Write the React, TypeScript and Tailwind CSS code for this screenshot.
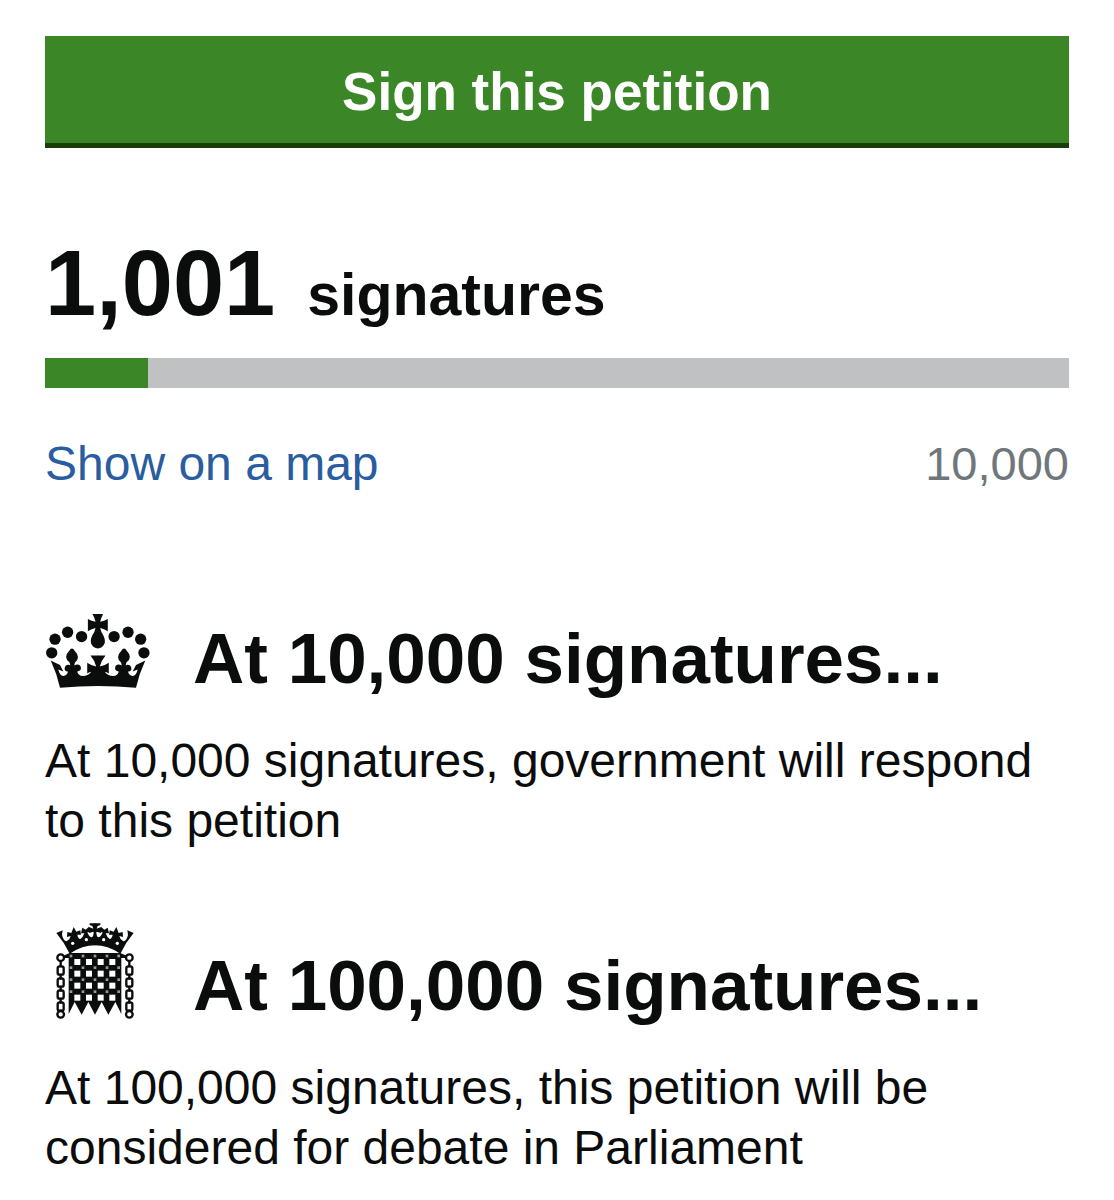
import type { ReactNode } from "react";

function CrownIcon() {
  const pearls = [
    [35, 141], [45, 100], [83, 79], [125, 92],
    [223, 92], [265, 79], [303, 100], [313, 141],
  ];
  const half =
    "M32 164L60 178L70 197L55 191Q59 210 70 211Q82 208 84 197Q73 198 74 187Q76 176 87 177L91 179L89 170Q68 155 89 133Q91 128 96 128Q101 128 103 133Q124 155 105 170L103 179L108 177Q121 174 123 186Q124 196 112 197Q115 210 129 211Q144 211 154 199Q149 199 142 203V171Q156 181 169 182Q165 165 152 149H175V241Q118 241 60 246Q50 202 32 164Z";
  return (
    <svg viewBox="18 24 313 223" className="h-[74px] w-[104px]" fill="#0b0c0c" aria-hidden="true">
      {pearls.map(([x, y]) => (
        <circle key={x} cx={x} cy={y} r="17" />
      ))}
      <path d="M158 24H190Q184 35 181 47Q193 45 204 39V76Q193 69 181 66Q183 77 190 87Q198 103 194 114Q187 128 174 128Q161 128 154 114Q150 103 158 87Q165 77 167 66Q155 69 144 76V39Q155 45 167 47Q164 35 158 24Z" />
      <path d={half} />
      <path d={half} transform="matrix(-1 0 0 1 349 0)" />
    </svg>
  );
}

function PortcullisIcon() {
  const columns = [88, 123, 158, 193];
  const rows = [127, 162, 198, 234];
  const studs = [78, 114, 150, 186, 221];
  const crownHalf =
    "M34 49L53 41L51 54Q54 71 65 74Q75 69 77 58L66 61L67 46L79 49L86 31L94 45L106 41L108 54L97 54Q99 66 106 67Q114 62 118 50L108 50L112 33L122 39L132 30L134 46L127 47Q132 62 141 62Q146 58 146 45L132 49V31L145 36L142 28L134 25V20H151V86Q112 86 74 111Q57 76 34 49Z";
  return (
    <svg viewBox="33 20 234 286" className="h-24 w-[78px]" fill="#0b0c0c" aria-hidden="true">
      <path d={crownHalf} />
      <path d={crownHalf} transform="matrix(-1 0 0 1 300 0)" />
      <g fill="#fff">
        <circle cx="83" cy="80" r="5" />
        <circle cx="124" cy="69" r="5" />
        <circle cx="176" cy="69" r="5" />
        <circle cx="217" cy="80" r="5" />
      </g>
      <path d="M55 117L74 109H226L245 117V124H229V292L211 256L190 294L170 256L150 294L130 256L110 294L89 256L71 292V124H55Z" />
      <g fill="#fff">
        {rows.map((y) => columns.map((x) => <rect key={`${x}-${y}`} x={x} y={y} width="18" height="18" />))}
      </g>
      <g fill="#999">
        {[118, 153, 189, 225].map((y) => studs.map((x) => <rect key={`${x}-${y}`} x={x - 4} y={y - 4} width="8" height="8" />))}
      </g>
      <g fill="none" stroke="#0b0c0c" strokeWidth="7">
        {[47, 253].map((x) => (
          <g key={x}>
            <circle cx={x} cy="123" r="10" fill="#fff" />
            <circle cx={x} cy="293" r="10" />
            {[149, 185, 221, 257].map((y) => (
              <rect key={y} x={x - 9} y={y} width="18" height="25" rx="6" />
            ))}
            <path d={`M${x} 134V152M${x} 171V189M${x} 207V225M${x} 243V261M${x} 279V286`} />
          </g>
        ))}
      </g>
    </svg>
  );
}

function Threshold({ icon, title, children }: { icon: ReactNode; title: string; children: ReactNode }) {
  return (
    <section>
      <div className="flex items-end">
        <div className="flex w-[148px] shrink-0">{icon}</div>
        <h2 className="text-[71px] leading-[80px] font-bold">{title}</h2>
      </div>
      <p className="mt-8 text-[48px] leading-[60px]">{children}</p>
    </section>
  );
}

export default function App() {
  const signatures = 1001;
  const goal = 10000;
  return (
    <main className="bg-white px-[45px] pt-9 font-['Liberation_Sans',Arial,sans-serif] text-[#0b0c0c]">
      <button type="button" className="block w-full cursor-pointer border-b-[5px] border-[#1a3d0c] bg-[#3b8626] pt-[26px] pb-[21px] text-[53px] leading-[60px] font-bold text-white">
        Sign this petition
      </button>
      <p className="mt-20 flex items-baseline gap-8 font-bold">
        <span className="text-[92px] leading-[110px]">1,001</span>
        <span className="text-[59px] leading-[60px]">signatures</span>
      </p>
      <div role="progressbar" aria-label="Signatures" aria-valuenow={signatures} aria-valuemin={0} aria-valuemax={goal} className="mt-5 h-[30px] bg-[#bfc1c3]">
        <div className="h-full bg-[#3b8626]" style={{ width: `${(signatures / goal) * 100}%` }} />
      </div>
      <div className="mt-[46px] flex items-baseline justify-between leading-[60px]">
        <a href="#map" className="text-[48px] text-[#2a5d9f]">Show on a map</a>
        <span className="text-[47px] text-[#6f777b]">10,000</span>
      </div>
      <div className="mt-[120px] flex flex-col gap-[72px]">
        <Threshold icon={<div className="pb-[11px] pl-px"><CrownIcon /></div>} title="At 10,000 signatures...">
          At 10,000 signatures, government will respond to this petition
        </Threshold>
        <Threshold icon={<div className="pb-[7px] pl-[11px]"><PortcullisIcon /></div>} title="At 100,000 signatures...">
          At 100,000 signatures, this petition will be considered for debate in Parliament
        </Threshold>
      </div>
    </main>
  );
}
